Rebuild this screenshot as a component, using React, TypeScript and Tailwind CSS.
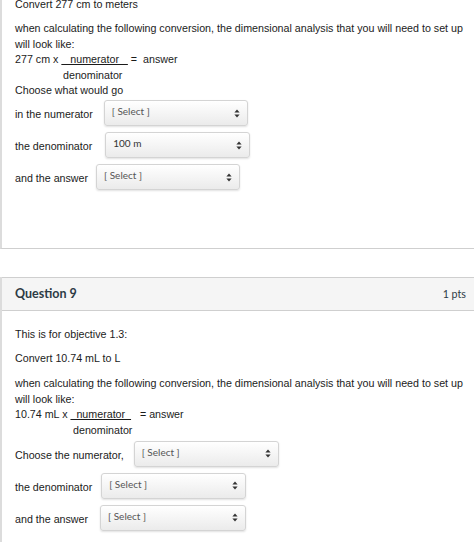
const body = "font-['Liberation_Sans',Arial,sans-serif] text-[10.7px] leading-[15.5px] text-[#1b1b1b]"

function Arrows() {
  return (
    <svg width="6" height="9" viewBox="0 0 6 9" className="shrink-0">
      <path d="M3 0.5 L5.6 3.6 H0.4 Z" fill="#333" />
      <path d="M3 8.5 L5.6 5.4 H0.4 Z" fill="#333" />
    </svg>
  )
}

function Select({ value = "[ Select ]", className = "" }: { value?: string; className?: string }) {
  const placeholder = value === "[ Select ]"
  return (
    <div
      className={`flex h-[26px] w-[144px] items-center justify-between rounded-[3px] border border-[#d4d4d4] bg-gradient-to-b from-white to-[#ebebeb] pl-[7px] pr-[7px] shadow-[0_1px_2px_rgba(0,0,0,0.12)] ${className}`}
    >
      <span
        className={`-mt-[3px] font-['Lato',sans-serif] text-[10px] ${placeholder ? "text-[#555]" : "text-[#333]"}`}
      >
        {value}
      </span>
      <Arrows />
    </div>
  )
}

function Row({ label, children }: { label: string; children: React.ReactNode }) {
  return (
    <div className="flex h-[26px] items-center">
      <span className="pt-[3px]">{label}</span>
      {children}
    </div>
  )
}

export default function App() {
  return (
    <div className={`min-h-[542px] w-[474px] overflow-hidden bg-white ${body}`}>
      {/* previous question, cut at top */}
      <div className="flow-root h-[249px] border-b border-l-2 border-b-[#cfcfcf] border-l-[#dcdcdc] pl-[13px]">
        <p className="-mt-[3px]">Convert 277 cm to meters</p>
        <div className="mt-[8.75px]">
          <p>
            when calculating the following conversion, the dimensional analysis that you will need to set up
            will look like:
          </p>
          <p>
            277 cm x <span className="underline">{"\u00a0\u00a0\u00a0numerator\u00a0\u00a0\u00a0"}</span>
            {" =\u00a0\u00a0answer"}
          </p>
          <p className="pl-[48px]">denominator</p>
          <p>Choose what would go</p>
        </div>
        <div className="mt-[1.25px] flex flex-col gap-[6px]">
          <Row label="in the numerator">
            <Select className="ml-[11px]" />
          </Row>
          <Row label="the denominator">
            <Select value="100 m" className="ml-[13px] w-[145px]" />
          </Row>
          <Row label="and the answer">
            <Select className="ml-[8px]" />
          </Row>
        </div>
      </div>

      <div className="h-[28px]" />

      {/* Question 9 */}
      <div className="border-l-2 border-l-[#dcdcdc] pb-[20px]">
        <div className="flex h-[34px] items-center justify-between border-y border-[#cfcfcf] bg-[#f5f5f5] pl-[13px] pr-[8px]">
          <span className="font-['Lato',sans-serif] text-[12.5px] font-bold text-[#2d3b45]">Question 9</span>
          <span className="font-['Lato',sans-serif] text-[10.7px] text-[#2d3b45]">1 pts</span>
        </div>
        <div className="pl-[13px]">
          <p className="mt-[16.25px]">This is for objective 1.3:</p>
          <p className="mt-[8.5px]">Convert 10.74 mL to L</p>
          <div className="mt-[9.5px]">
            <p>
              when calculating the following conversion, the dimensional analysis that you will need to set up
              will look like:
            </p>
            <p>
              10.74 mL x <span className="underline">{"\u00a0\u00a0numerator\u00a0\u00a0"}</span>
              {"\u00a0\u00a0\u00a0= answer"}
            </p>
            <p className="pl-[58px]">denominator</p>
          </div>
          <div className="mt-[2.5px] flex flex-col gap-[6px]">
            <Row label="Choose the numerator,">
              <Select className="ml-[10px] w-[145px]" />
            </Row>
            <Row label="the denominator">
              <Select className="ml-[9px] w-[145px]" />
            </Row>
            <Row label="and the answer">
              <Select className="ml-[12px] w-[146px]" />
            </Row>
          </div>
        </div>
      </div>
    </div>
  )
}
